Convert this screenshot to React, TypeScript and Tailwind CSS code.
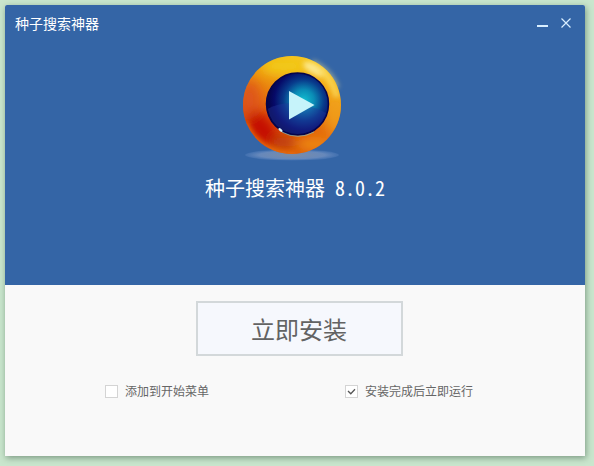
import { useState } from 'react';

const APP_NAME = '种子搜索神器';
const APP_VERSION = '8.0.2';

function PlayerLogo() {
  return (
    <svg viewBox="3 0 124 124" className="w-[124px] h-[124px]" aria-hidden="true">
      <defs>
        <linearGradient id="ring" x1="0.75" y1="0.05" x2="0.3" y2="0.95">
          <stop offset="0" stopColor="#f8c822" />
          <stop offset="0.4" stopColor="#ec9010" />
          <stop offset="0.75" stopColor="#de500c" />
          <stop offset="1" stopColor="#dc5c0c" />
        </linearGradient>
        <radialGradient id="lens" cx="0.6" cy="0.44" r="0.56">
          <stop offset="0" stopColor="#12bdd0" />
          <stop offset="0.3" stopColor="#0a8cb6" />
          <stop offset="0.58" stopColor="#083c8c" />
          <stop offset="0.85" stopColor="#060a68" />
          <stop offset="1" stopColor="#05054e" />
        </radialGradient>
        <radialGradient id="shadow">
          <stop offset="0" stopColor="#7f8ea6" stopOpacity="0.95" />
          <stop offset="0.7" stopColor="#7391c0" stopOpacity="0.8" />
          <stop offset="1" stopColor="#6189c4" stopOpacity="0.3" />
        </radialGradient>
        <filter id="soft" x="-80%" y="-80%" width="260%" height="260%">
          <feGaussianBlur stdDeviation="6" />
        </filter>
        <filter id="glow" x="-60%" y="-60%" width="220%" height="220%">
          <feGaussianBlur stdDeviation="2.5" />
        </filter>
        <clipPath id="ringClip">
          <circle cx="62" cy="60" r="49" />
        </clipPath>
        <clipPath id="lensClip">
          <circle cx="67.5" cy="59" r="30" />
        </clipPath>
      </defs>

      <ellipse cx="62" cy="110" rx="47" ry="5.5" fill="url(#shadow)" />
      <path d="M82 17 A 47 47 0 0 1 107 43" fill="none" stroke="#ffe889" strokeWidth="5" opacity="0.5" filter="url(#glow)" />

      <circle cx="62" cy="60" r="49" fill="url(#ring)" />
      <g clipPath="url(#ringClip)">
        <g filter="url(#soft)">
          <ellipse cx="54" cy="21" rx="24" ry="8" fill="#f2cc14" />
          <ellipse cx="20" cy="56" rx="9" ry="20" fill="#de541a" />
          <ellipse cx="32" cy="84" rx="20" ry="12" fill="#c40a04" transform="rotate(50 32 84)" />
          <ellipse cx="54" cy="97" rx="13" ry="6" fill="#b83a08" />
          <ellipse cx="84" cy="99" rx="18" ry="7" fill="#ee900e" />
          <ellipse cx="105" cy="70" rx="6" ry="20" fill="#f2a01c" />
        </g>
        <ellipse cx="84" cy="24" rx="12" ry="5" fill="#fdf0a0" opacity="0.85" transform="rotate(30 84 24)" filter="url(#glow)" />
        <path d="M90 24 Q102 34 107 52" fill="none" stroke="#fbdc62" strokeWidth="6" opacity="0.8" filter="url(#glow)" />
        <path d="M15 78 A 49 49 0 0 0 66 109" fill="none" stroke="#ee760c" strokeWidth="5" opacity="0.8" filter="url(#glow)" />
      </g>

      <circle cx="67.5" cy="59" r="31" fill="url(#lens)" stroke="#06044a" strokeWidth="1.5" />
      <g clipPath="url(#lensClip)">
        <path d="M34 66 Q62 48 104 72 V96 H34Z" fill="#23379d" opacity="0.4" />
      </g>
      <path d="M52 87 A 32 32 0 0 0 84 87" fill="none" stroke="#79c7c9" strokeWidth="0.8" opacity="0.8" />
      <ellipse cx="50.500" cy="85" rx="2.5" ry="1.2" fill="#d7f3f7" transform="rotate(38 50.5 85)" />
      <path d="M59 46 L84.500 60 L59 74.500Z" fill="#c6f3fa" />
    </svg>
  );
}

function Option({ label, initial }: { label: string; initial: boolean }) {
  const [checked, setChecked] = useState(initial);

  return (
    <label className="flex items-center gap-[7px] text-xs text-[#666666]">
      <span className="grid">
        <input
          type="checkbox"
          checked={checked}
          onChange={(e) => setChecked(e.target.checked)}
          className="col-start-1 row-start-1 appearance-none w-[13px] h-[13px] bg-white border border-[#d4d4d4]"
        />
        {checked && (
          <svg viewBox="0 0 13 13" className="col-start-1 row-start-1 w-[13px] h-[13px] pointer-events-none" aria-hidden="true">
            <path d="M3 6 L5.800 8.800 L10 4.300" fill="none" stroke="#555" strokeWidth="1.300" />
          </svg>
        )}
      </span>
      {label}
    </label>
  );
}

export default function App() {
  return (
    <div className="min-h-screen flex bg-[#c9e6cd] pt-[5px] pl-[5px] pr-[9px] pb-[10px] font-['Noto_Sans_CJK_SC',sans-serif]">
      <div className="flex-1 flex flex-col rounded-t-xs overflow-hidden bg-[#f9f9f9] shadow-[1px_2px_6px_rgba(60,90,70,0.55)]">
        <header className="bg-[#3465a6] text-white pb-[83px]">
          <div className="flex items-center justify-between h-9 pl-[10px] pr-3">
            <span className="text-sm">{APP_NAME}</span>
            <div className="flex gap-2">
              <button type="button" aria-label="最小化" className="w-4 h-4">
                <svg viewBox="0 0 16 16" className="w-4 h-4">
                  <path d="M4 11H15" stroke="#d8eeff" strokeWidth="2" />
                </svg>
              </button>
              <button type="button" aria-label="关闭" className="w-4 h-4">
                <svg viewBox="0 0 16 16" className="w-4 h-4">
                  <path d="M4.500 3.500L13.500 12.500M13.500 3.500L4.500 12.500" stroke="#d8eeff" strokeWidth="1.200" />
                </svg>
              </button>
            </div>
          </div>

          <div className="flex flex-col items-center pt-1">
            <PlayerLogo />
            <h1 className="mt-[5px] text-xl leading-7 [font-feature-settings:'hwid']">
              {APP_NAME} {APP_VERSION}
            </h1>
          </div>
        </header>

        <main className="flex-1 flex flex-col pt-4">
          <div className="flex justify-center pl-2">
            <button
              type="button"
              className="w-[207px] h-[55px] bg-[#f6f8fd] border-2 border-[#d3d8da] text-2xl text-[#636363]"
            >
              立即安装
            </button>
          </div>
          <div className="grid grid-cols-2 pl-[100px] mt-[27px]">
            <Option label="添加到开始菜单" initial={false} />
            <Option label="安装完成后立即运行" initial={true} />
          </div>
        </main>
      </div>
    </div>
  );
}
